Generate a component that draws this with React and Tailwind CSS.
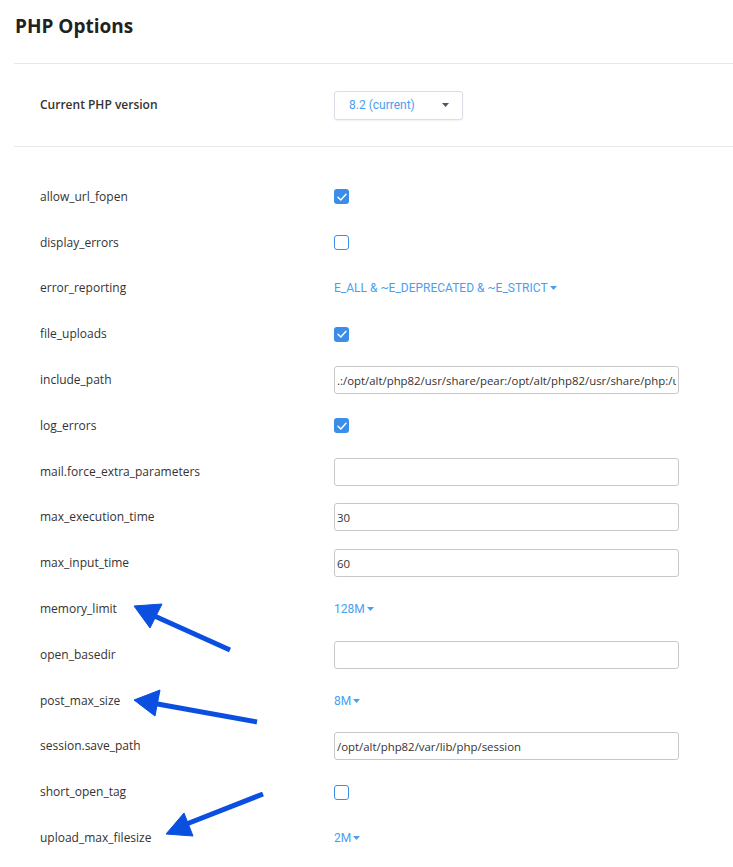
const rows = [
  { name: 'allow_url_fopen', type: 'check', value: true },
  { name: 'display_errors', type: 'check', value: false },
  { name: 'error_reporting', type: 'link', value: 'E_ALL & ~E_DEPRECATED & ~E_STRICT' },
  { name: 'file_uploads', type: 'check', value: true },
  { name: 'include_path', type: 'text', value: '.:/opt/alt/php82/usr/share/pear:/opt/alt/php82/usr/share/php:/usr/share/pear' },
  { name: 'log_errors', type: 'check', value: true },
  { name: 'mail.force_extra_parameters', type: 'text', value: '' },
  { name: 'max_execution_time', type: 'text', value: '30' },
  { name: 'max_input_time', type: 'text', value: '60' },
  { name: 'memory_limit', type: 'link', value: '128M' },
  { name: 'open_basedir', type: 'text', value: '' },
  { name: 'post_max_size', type: 'link', value: '8M' },
  { name: 'session.save_path', type: 'text', value: '/opt/alt/php82/var/lib/php/session' },
  { name: 'short_open_tag', type: 'check', value: false },
  { name: 'upload_max_filesize', type: 'link', value: '2M' },
];

function Caret({ className = '' }) {
  return (
    <svg className={className} width="7" height="4" viewBox="0 0 7 4">
      <path d="M0 0h7L3.5 4z" fill="currentColor" />
    </svg>
  );
}

function Field({ row }) {
  if (row.type === 'check') {
    return row.value ? (
      <span className="flex justify-center items-center bg-[#3b8ee8] rounded-[3px] w-[15px] h-[15px]">
        <svg width="10" height="8" viewBox="0 0 10 8">
          <path d="M1 4.2 3.8 7 9 1.2" fill="none" stroke="white" strokeWidth="1.4" strokeLinecap="round" strokeLinejoin="round" />
        </svg>
      </span>
    ) : (
      <span className="block bg-white border-[1.5px] border-[#3b8ee8] rounded-[3px] w-[15px] h-[15px]" />
    );
  }
  if (row.type === 'link') {
    return (
      <span className="flex items-center gap-[2px] font-['Roboto',sans-serif] text-[#4a9ef0] text-[12px]">
        {row.value}
        <Caret />
      </span>
    );
  }
  return (
    <input
      type="text"
      defaultValue={row.value}
      className="bg-white px-[2px] border border-[#c8c8c8] rounded-[3px] outline-none w-[345px] h-[28px] text-[#333] text-[11.4px]"
    />
  );
}

export default function App() {
  return (
    <div className="relative bg-white w-[733px] h-[867px] overflow-hidden font-['Open_Sans',sans-serif]">
      <h1 className="px-[15px] pt-[13px] pb-[23px] font-bold text-[#222] text-[19px] leading-[27px]">PHP Options</h1>

      <div className="ml-[14px] border-[#e8e8e8] border-t border-b">
        <div className="flex items-center pl-[26px] h-[82px]">
          <span className="w-[294px] font-semibold text-[#333] text-[12px]">Current PHP version</span>
          <div className="flex justify-between items-center bg-white shadow-[0_1px_2px_rgba(0,0,0,0.06)] pr-[13px] pl-[14px] border border-[#dcdcec] rounded-[3px] w-[129px] h-[29px]">
            <span className="font-['Roboto',sans-serif] text-[#4a9ef0] text-[12px]">8.2 (current)</span>
            <Caret className="text-[#555]" />
          </div>
        </div>
      </div>

      <div className="pt-[27px] pl-[40px]">
        {rows.map((row) => (
          <div key={row.name} className="flex items-center h-[45.8px]">
            <span className="w-[294px] text-[#333] text-[12px]">{row.name}</span>
            <Field row={row} />
          </div>
        ))}
      </div>

      {/* annotation arrows */}
      <svg className="absolute inset-0 pointer-events-none" width="733" height="867">
        <g fill="#0a4fe0" stroke="#0a4fe0">
          <line x1="230" y1="650" x2="150" y2="614" strokeWidth="5" />
          <path d="M134 606 L162 604 L150 628 Z" strokeWidth="1" />
          <line x1="257" y1="722" x2="152" y2="703" strokeWidth="5" />
          <path d="M134 700 L160 690 L155 716 Z" strokeWidth="1" />
          <line x1="263" y1="794" x2="184" y2="825" strokeWidth="5" />
          <path d="M166 834 L184 813 L193 836 Z" strokeWidth="1" />
        </g>
      </svg>
    </div>
  );
}
